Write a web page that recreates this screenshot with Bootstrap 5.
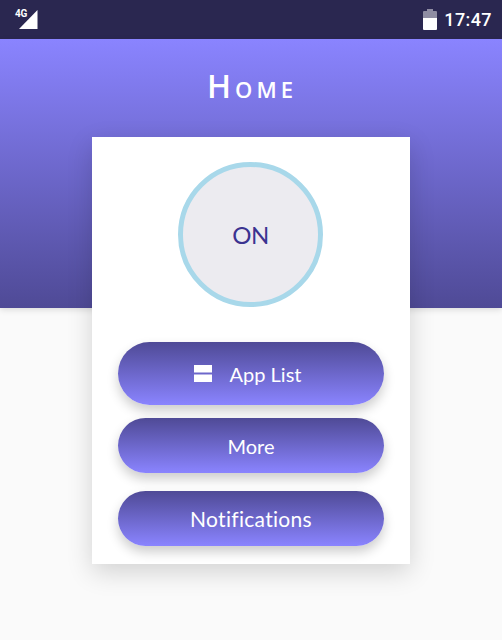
<!DOCTYPE html>
<html lang="en">
<head>
<meta charset="utf-8">
<title>Home</title>
<link href="https://cdn.jsdelivr.net/npm/bootstrap@5.3.0/dist/css/bootstrap.min.css" rel="stylesheet">
<style>
html,body{height:640px;overflow:hidden}
body{background:#fafafa;font-family:"Roboto","Liberation Sans",sans-serif}
.status-strip{height:39px;background:#2a2750;color:#fff;padding:0 10px 0 15px}
.status-right{gap:7px}
.status-clock{font-size:18px;font-weight:500;letter-spacing:.4px;font-family:"Roboto",sans-serif}
.net-label{font-size:10px;font-weight:700;line-height:1;position:absolute;left:0;top:-1px;letter-spacing:-.3px}
.net-wrap{position:relative;width:23px;height:19px;margin-top:0}
.hero{height:269px;background:linear-gradient(180deg,#8a84ff 0%,#4f4a96 100%);box-shadow:0 2px 6px rgba(0,0,0,.12)}
.hero-title{font-family:"Open Sans",sans-serif;font-variant:small-caps;font-size:32px;font-weight:600;letter-spacing:4px;line-height:44px;padding-top:25px;padding-left:2px;margin:0;color:#fff}
.panel{width:318px;height:427px;margin-top:-171px;background:#fff;box-shadow:0 8px 24px rgba(0,0,0,.16);padding:25px 26px 0;position:relative;z-index:1}
.dial{width:145px;height:145px;border-radius:50%;border:5px solid #a8d8ea;background:#ecebf0;color:#3b3390;font-family:"Lato",sans-serif;font-size:24px;font-weight:400;letter-spacing:-.5px;margin-bottom:35px;margin-right:1px}
.pill-btn{width:266px;height:55px;border:0;border-radius:28px;color:#fff;background:linear-gradient(180deg,#4f4a96 0%,#8a84ff 100%);box-shadow:0 6px 12px rgba(0,0,0,.2);font-family:"Lato",sans-serif;font-size:21px;letter-spacing:.3px;padding:0}
.pill-btn.pill-tall{height:63px;border-radius:32px;margin-bottom:13px;font-size:20px;letter-spacing:0;padding-right:7px}
.pill-btn.pill-mid{margin-bottom:18px;font-size:20px;letter-spacing:0}
.list-glyph{width:18px;height:17px;margin-right:18px}
</style>
</head>
<body>
<div class="status-strip d-flex align-items-center justify-content-between">
  <div class="net-wrap">
    <svg width="23" height="19" viewBox="0 0 23 19" class="d-block"><path d="M22.500 0V19H4Z" fill="#fff"/></svg>
    <span class="net-label">4G</span>
  </div>
  <div class="status-right d-flex align-items-center">
    <svg width="14" height="21" viewBox="0 0 14 21"><path d="M4 0h6v2h3a1 1 0 0 1 1 1v7H0V3a1 1 0 0 1 1-1h3Z" fill="#8f8da3"/><path d="M0 9h14v11a1 1 0 0 1-1 1H1a1 1 0 0 1-1-1Z" fill="#fff"/></svg>
    <span class="status-clock">17:47</span>
  </div>
</div>
<header class="hero text-center">
  <h1 class="hero-title">Home</h1>
</header>
<main class="panel mx-auto d-flex flex-column align-items-center">
  <div class="dial d-flex align-items-center justify-content-center flex-shrink-0">ON</div>
  <button type="button" class="btn pill-btn pill-tall d-flex align-items-center justify-content-center">
    <svg class="list-glyph" viewBox="0 0 18 17"><rect width="18" height="7.500" fill="#fff"/><rect y="9.500" width="18" height="7.500" fill="#fff"/></svg>App List
  </button>
  <button type="button" class="btn pill-btn pill-mid">More</button>
  <button type="button" class="btn pill-btn">Notifications</button>
</main>
</body>
</html>
